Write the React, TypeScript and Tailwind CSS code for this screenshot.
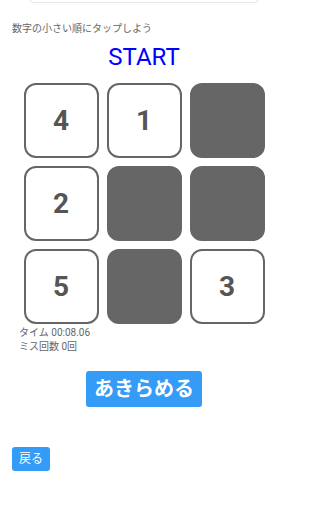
const tiles: (number | null)[] = [4, 1, null, 2, null, null, 5, null, 3];

function Tile({ value }: { value: number | null }) {
  if (value === null) {
    return <div className="w-[75px] h-[75px] rounded-[12px] border-2 border-[#666] bg-[#666]" />;
  }
  return (
    <div className="w-[75px] h-[75px] rounded-[12px] border-2 border-[#666] bg-white flex items-center justify-center text-[28px] font-bold text-[#555]">
      {value}
    </div>
  );
}

export default function App() {
  return (
    <div className="w-[288px] h-[512px] bg-white overflow-hidden font-['Roboto','Noto_Sans_CJK_JP',sans-serif]">
      <div className="ml-[30px] w-[228px] h-[3px] border border-t-0 border-[#e8e8e8] rounded-b-sm" />
      <p className="mt-[19px] ml-[12px] text-[10px] leading-[14px] text-[#666]">数字の小さい順にタップしよう</p>
      <h1 className="mt-[7px] text-center text-[24px] leading-[28px] text-[#0000ff]">START</h1>
      <div className="mt-[12px] mx-auto w-[241px] grid grid-cols-3 gap-[8px]">
        {tiles.map((t, i) => (
          <Tile key={i} value={t} />
        ))}
      </div>
      <div className="mt-[2px] ml-[19px] text-[10px] leading-[14px] text-[#666]">
        <p>タイム 00:08.06</p>
        <p>ミス回数 0回</p>
      </div>
      <div className="mt-[17px] flex justify-center">
        <button className="h-[36px] px-[8px] rounded-[3px] bg-[#349bf6] text-white text-[20px] leading-[28px] font-bold">
          あきらめる
        </button>
      </div>
      <button className="mt-[40px] ml-[12px] h-[24px] px-[7px] rounded-[3px] bg-[#349bf6] text-white text-[12px] leading-[16px]">
        戻る
      </button>
    </div>
  );
}
